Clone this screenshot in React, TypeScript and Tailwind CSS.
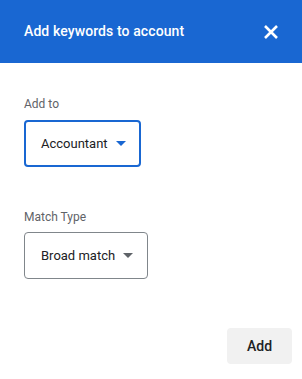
import React from 'react';

const Caret = ({ className }: { className: string }) => (
  <svg width="10" height="5" viewBox="0 0 10 5" className={className}>
    <path d="M0 0h10L5 5z" fill="currentColor" />
  </svg>
);

const App: React.FC = () => {
  return (
    <div className="w-[302px] h-[379px] bg-white flex flex-col font-['Roboto',sans-serif]">
      <div className="h-[63px] bg-[#1967d2] flex items-center justify-between pl-6 pr-[23px]">
        <h2 className="text-[14px] font-medium text-white tracking-[0.1px]">Add keywords to account</h2>
        <svg width="16" height="16" viewBox="0 0 16 16" className="text-white">
          <path d="M2 2l12 12M14 2L2 14" stroke="currentColor" strokeWidth="2.6" />
        </svg>
      </div>

      <div className="flex-1 flex flex-col px-6 pt-[33px]">
        <span className="text-[12px] text-[#5f6368] leading-4">Add to</span>
        <button className="mt-[8px] w-[117px] h-[47px] border-2 border-[#1967d2] rounded-[4px] flex items-center pl-[15px] gap-[8px]">
          <span className="text-[13px] text-[#202124]">Accountant</span>
          <Caret className="text-[#1967d2]" />
        </button>

        <span className="mt-[42px] text-[12px] text-[#5f6368] leading-4">Match Type</span>
        <button className="mt-[7px] w-[124px] h-[47px] border border-[#80868b] rounded-[4px] flex items-center pl-[16px] gap-[8px]">
          <span className="text-[13px] text-[#202124]">Broad match</span>
          <Caret className="text-[#5f6368]" />
        </button>

        <div className="mt-auto mb-[15px] flex justify-end -mr-[14px]">
          <button className="w-[65px] h-[36px] bg-[#f1f1f1] rounded-[4px] text-[14px] font-medium text-[#202124]">
            Add
          </button>
        </div>
      </div>
    </div>
  );
};

export default App;
